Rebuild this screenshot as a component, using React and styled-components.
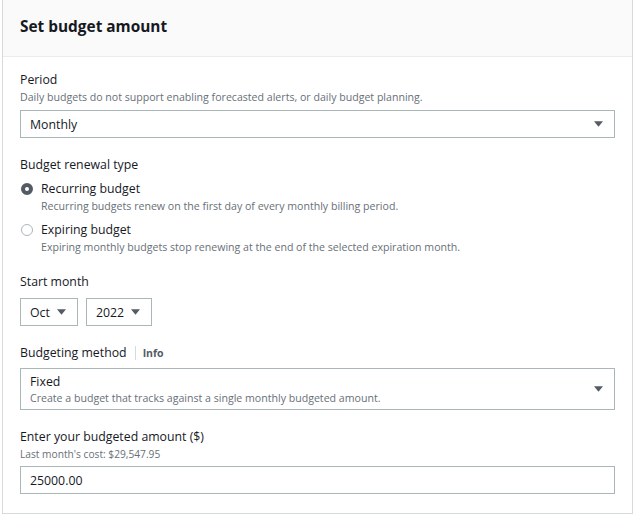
import React, { useState } from 'react';
import styled, { createGlobalStyle } from 'styled-components';

const GlobalStyle = createGlobalStyle`
  body {
    margin: 0;
    background: #ffffff;
    font-family: "Open Sans", "Noto Sans", Arial, sans-serif;
    color: #16191f;
  }
`;

const Card = styled.div`
  width: 631px;
  height: 514px;
  margin-left: 2px;
  box-sizing: border-box;
  border: 1px solid #d5dbdb;
  border-top: none;
  background: #fff;
  display: flex;
  flex-direction: column;
`;

const Header = styled.div`
  flex: none;
  height: 57px;
  box-sizing: border-box;
  background: #fafafa;
  border-bottom: 1px solid #eaeded;
  display: flex;
  align-items: center;
  padding: 0 17px 4px;
`;

const Title = styled.h2`
  margin: 0;
  font-size: 15.4px;
  font-weight: 700;
  color: #16191f;
`;

const Body = styled.div`
  padding: 14px 17px 0 17px;
  display: flex;
  flex-direction: column;
`;

const Field = styled.div`
  display: flex;
  flex-direction: column;
  margin-bottom: ${p => p.gap ?? 18}px;
`;

const Label = styled.div`
  font-size: 12.3px;
  line-height: 18px;
  color: #16191f;
  display: flex;
  align-items: center;
`;

const Info = styled.span`
  font-size: 10.5px;
  font-weight: 700;
  color: #545b64;
  border-left: 1px solid #d5dbdb;
  margin-left: 8px;
  padding-left: 7px;
  line-height: 14px;
`;

const Hint = styled.div`
  font-size: ${p => p.small ? 10.2 : 10.6}px;
  line-height: 16px;
  color: #687078;
`;

const SelectBox = styled.div`
  margin-top: ${p => p.top ?? 5}px;
  width: ${p => p.w ? p.w + 'px' : '100%'};
  height: ${p => p.h || 28}px;
  box-sizing: border-box;
  border: 1px solid #aab7b8;
  background: #fff;
  display: flex;
  align-items: center;
  justify-content: space-between;
  padding: 0 11px 0 9px;
`;

const SelectValue = styled.div`
  display: flex;
  flex-direction: column;
  font-size: 12.3px;
  line-height: 17px;
`;

const Arrow = styled.svg`
  width: 9px;
  height: 6px;
  flex: none;
`;

const Row = styled.div`
  display: flex;
  gap: 8px;
`;

const RadioGroup = styled.div`
  display: flex;
  flex-direction: column;
  gap: 7px;
  margin-top: 6px;
`;

const RadioRow = styled.div`
  display: flex;
  gap: 8px;
  cursor: pointer;
`;

const RadioDot = styled.span`
  width: 12px;
  height: 12px;
  margin: 3px 0 0 1px;
  border-radius: 50%;
  flex: none;
  box-sizing: border-box;
  border: ${p => p.checked ? '4px solid #545b64' : '1px solid #aab7b8'};
  background: #fff;
`;

const RadioText = styled.div`
  display: flex;
  flex-direction: column;
`;

const Input = styled.input`
  margin-top: 4px;
  height: 28px;
  box-sizing: border-box;
  border: 1px solid #aab7b8;
  padding: 0 9px;
  font-family: inherit;
  font-size: 12.3px;
  color: #16191f;
  outline: none;
`;

const DownArrow = () => (
  <Arrow viewBox="0 0 9 6">
    <path d="M0 0.3h9L4.5 5.8z" fill="#545b64" />
  </Arrow>
);

export default function App() {
  const [renewal, setRenewal] = useState('recurring');

  return (
    <>
      <GlobalStyle />
      <Card>
        <Header>
          <Title>Set budget amount</Title>
        </Header>
        <Body>
          <Field>
            <Label>Period</Label>
            <Hint>Daily budgets do not support enabling forecasted alerts, or daily budget planning.</Hint>
            <SelectBox>
              <SelectValue>Monthly</SelectValue>
              <DownArrow />
            </SelectBox>
          </Field>

          <Field>
            <Label>Budget renewal type</Label>
            <RadioGroup>
              <RadioRow onClick={() => setRenewal('recurring')}>
                <RadioDot checked={renewal === 'recurring'} />
                <RadioText>
                  <Label>Recurring budget</Label>
                  <Hint>Recurring budgets renew on the first day of every monthly billing period.</Hint>
                </RadioText>
              </RadioRow>
              <RadioRow onClick={() => setRenewal('expiring')}>
                <RadioDot checked={renewal === 'expiring'} />
                <RadioText>
                  <Label>Expiring budget</Label>
                  <Hint>Expiring monthly budgets stop renewing at the end of the selected expiration month.</Hint>
                </RadioText>
              </RadioRow>
            </RadioGroup>
          </Field>

          <Field>
            <Label>Start month</Label>
            <Row>
              <SelectBox w={58} top={7}>
                <SelectValue>Oct</SelectValue>
                <DownArrow />
              </SelectBox>
              <SelectBox w={66} top={7}>
                <SelectValue>2022</SelectValue>
                <DownArrow />
              </SelectBox>
            </Row>
          </Field>

          <Field>
            <Label>Budgeting method<Info>Info</Info></Label>
            <SelectBox h={42} top={6}>
              <SelectValue>
                Fixed
                <Hint>Create a budget that tracks against a single monthly budgeted amount.</Hint>
              </SelectValue>
              <DownArrow />
            </SelectBox>
          </Field>

          <Field gap={0}>
            <Label>Enter your budgeted amount ($)</Label>
            <Hint small>Last month's cost: $29,547.95</Hint>
            <Input defaultValue="25000.00" />
          </Field>
        </Body>
      </Card>
    </>
  );
}
